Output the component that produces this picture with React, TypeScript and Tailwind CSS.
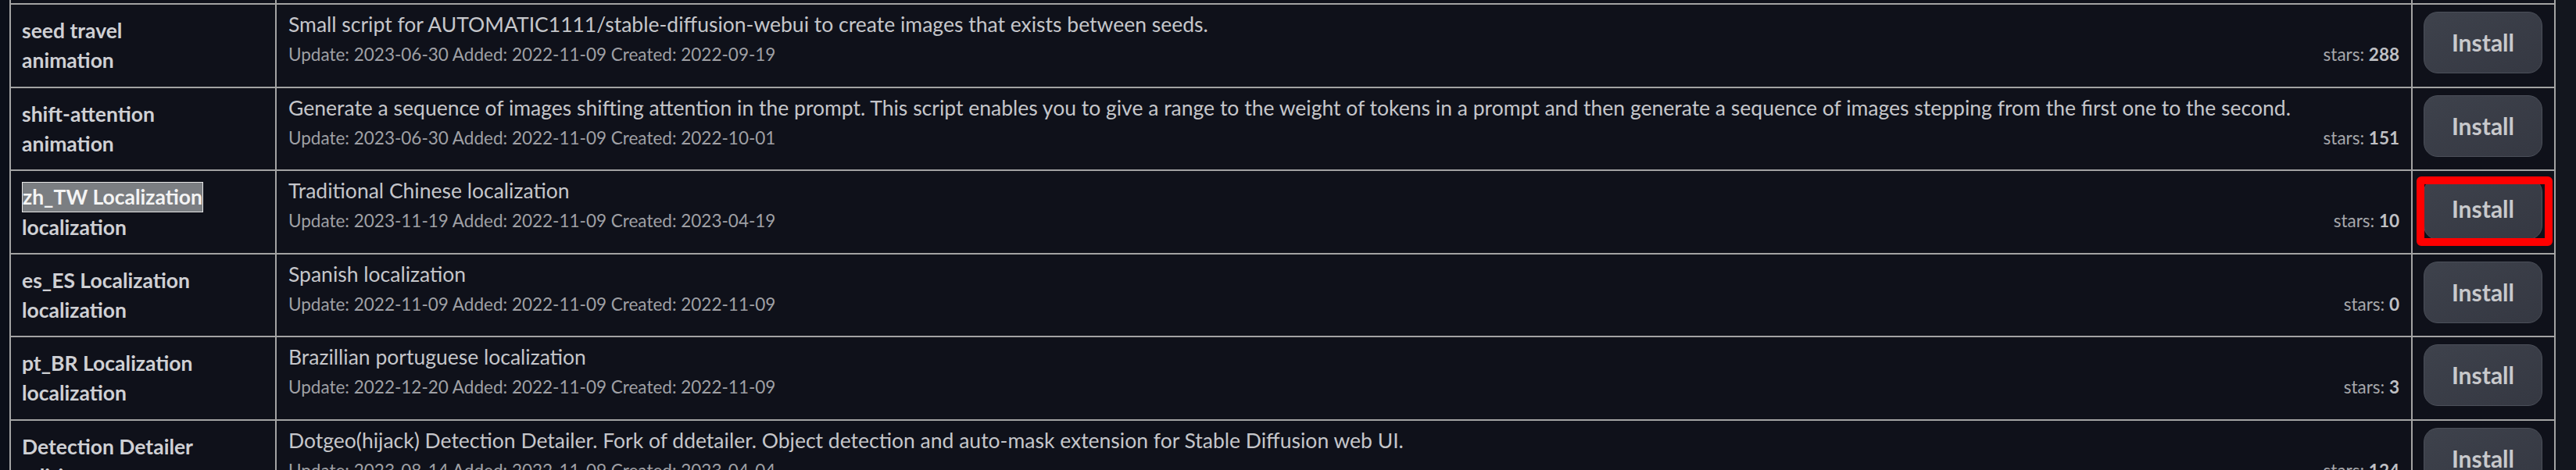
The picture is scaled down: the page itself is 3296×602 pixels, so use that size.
import React from 'react'

interface Ext {
  name: string
  tag: string
  desc: string
  dates: string
  stars: number
  highlight?: boolean
  marked?: boolean
}

const EXTS: Ext[] = [
  {
    name: 'seed travel',
    tag: 'animation',
    desc: 'Small script for AUTOMATIC1111/stable-diffusion-webui to create images that exists between seeds.',
    dates: 'Update: 2023-06-30 Added: 2022-11-09 Created: 2022-09-19',
    stars: 288,
  },
  {
    name: 'shift-attention',
    tag: 'animation',
    desc: 'Generate a sequence of images shifting attention in the prompt. This script enables you to give a range to the weight of tokens in a prompt and then generate a sequence of images stepping from the first one to the second.',
    dates: 'Update: 2023-06-30 Added: 2022-11-09 Created: 2022-10-01',
    stars: 151,
  },
  {
    name: 'zh_TW Localization',
    tag: 'localization',
    desc: 'Traditional Chinese localization',
    dates: 'Update: 2023-11-19 Added: 2022-11-09 Created: 2023-04-19',
    stars: 10,
    highlight: true,
    marked: true,
  },
  {
    name: 'es_ES Localization',
    tag: 'localization',
    desc: 'Spanish localization',
    dates: 'Update: 2022-11-09 Added: 2022-11-09 Created: 2022-11-09',
    stars: 0,
  },
  {
    name: 'pt_BR Localization',
    tag: 'localization',
    desc: 'Brazillian portuguese localization',
    dates: 'Update: 2022-12-20 Added: 2022-11-09 Created: 2022-11-09',
    stars: 3,
  },
  {
    name: 'Detection Detailer',
    tag: 'editing',
    desc: 'Dotgeo(hijack) Detection Detailer. Fork of ddetailer. Object detection and auto-mask extension for Stable Diffusion web UI.',
    dates: 'Update: 2023-08-14 Added: 2022-11-09 Created: 2023-04-04',
    stars: 124,
  },
]

function ExtRow({ ext }: { ext: Ext }) {
  return (
    <div className="flex h-[106.5px] shrink-0 border-b-2 border-[#a3a3a3]">
      {/* name + tag */}
      <div className="w-[340px] shrink-0 border-r-2 border-[#a3a3a3] pl-[14px] pt-[14px] text-[26.5px] font-bold leading-[38px] text-[#cfd0d4]">
        <div>
          {ext.highlight ? (
            <span className="inline-block border border-[#e6e6e6] bg-[#7b7e82] leading-[37px] text-[#f4f4f4]">{ext.name}</span>
          ) : (
            ext.name
          )}
        </div>
        <div>{ext.tag}</div>
      </div>

      {/* description + dates + stars */}
      <div className="min-w-0 flex-1 border-r-2 border-[#a3a3a3] pl-[15px] pr-[15px] pt-[7px]">
        <div className="whitespace-nowrap text-[26.5px] leading-[37px] text-[#c5c6ca]">{ext.desc}</div>
        <div className="flex items-baseline justify-between text-[22.5px] leading-[40px]">
          <span className="text-[#9fa0a5]">{ext.dates}</span>
          <span className="text-[#a6a7ab]">
            stars: <b className="text-[#bfc0c4]">{ext.stars}</b>
          </span>
        </div>
      </div>

      {/* install */}
      <div className="relative w-[181px] shrink-0 pl-[14px] pt-[9px]">
        <button className="h-[79px] w-[152px] rounded-[18px] border border-[#4b4f59] bg-linear-to-br from-[#3e424c] to-[#353842] text-[30px] font-bold text-[#c8c9cc]">
          Install
        </button>
        {ext.marked && (
          <div className="absolute left-[5px] top-[7px] h-[89px] w-[174px] rounded-[6px] border-[10px] border-[#ff0000]" />
        )}
      </div>
    </div>
  )
}

export default function App() {
  return (
    <div className="flex h-[602px] w-[3296px] overflow-hidden bg-[#0b0f19] font-[Lato,sans-serif]">
      <div className="w-[12px] shrink-0" />
      <div className="flex w-[3258px] shrink-0 flex-col border-x-2 border-[#a3a3a3] bg-[#0f111a]">
        {/* tail of the previous row */}
        <div className="flex h-[6px] shrink-0 border-b-2 border-[#a3a3a3]">
          <div className="w-[340px] shrink-0 border-r-2 border-[#a3a3a3]" />
          <div className="flex-1 border-r-2 border-[#a3a3a3]" />
          <div className="w-[181px] shrink-0" />
        </div>
        {EXTS.map(ext => (
          <ExtRow key={ext.name} ext={ext} />
        ))}
      </div>
      <div className="flex-1 bg-[#13161e]" />
    </div>
  )
}
